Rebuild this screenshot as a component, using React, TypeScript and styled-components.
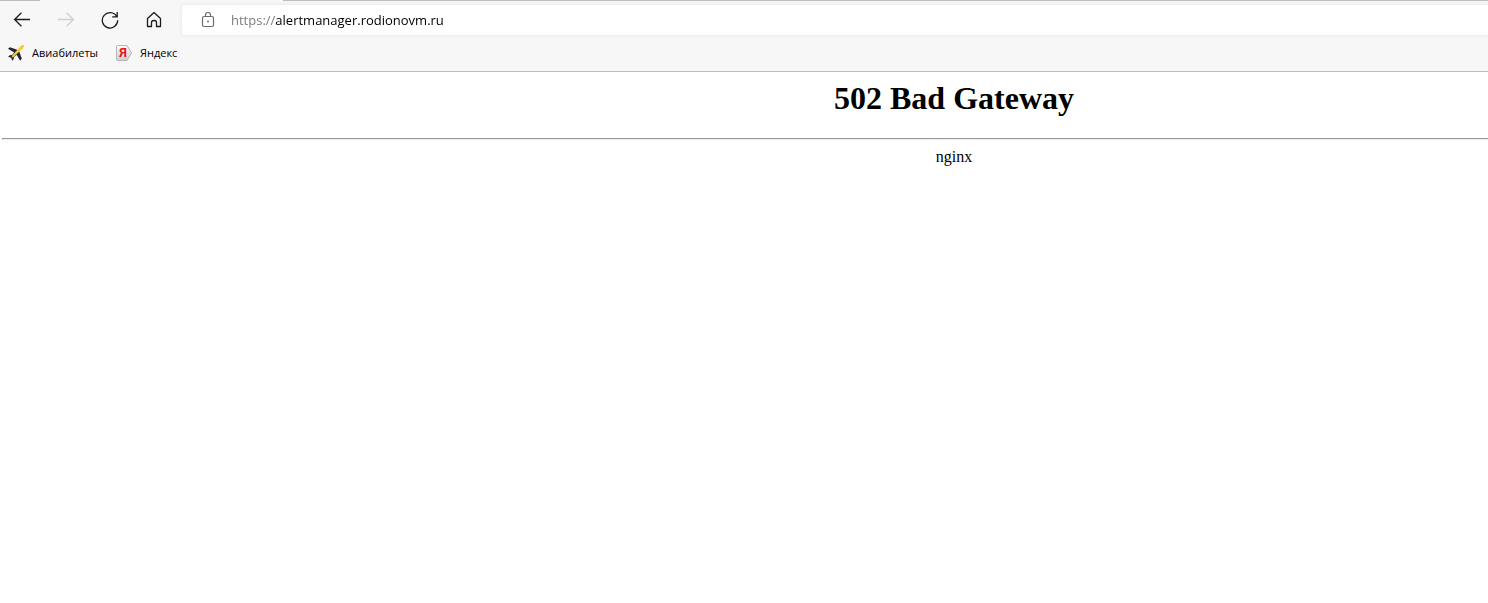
import React, { useState } from 'react';
import styled, { createGlobalStyle } from 'styled-components';

const GlobalStyle = createGlobalStyle`
  * { box-sizing: border-box; }
  body { margin: 0; background: #fff; overflow-x: hidden; }
`;

const Chrome = styled.header`
  background: #f7f7f7;
  border-bottom: 1px solid #bdbdbd;
  font-family: "Segoe UI", "Open Sans", "Noto Sans", sans-serif;
`;

const TabEdge = styled.div`
  display: flex;
  height: 1px;
  background: #bdbdbd;
`;

const ActiveTab = styled.div`
  width: 243px;
  margin-left: 40px;
  background: #f7f7f7;
`;

const Toolbar = styled.div`
  display: flex;
  align-items: center;
  height: 38px;
`;

const NavButtons = styled.nav`
  display: flex;
  flex: none;
  width: 182px;
`;

const NavButton = styled.button`
  display: flex;
  align-items: center;
  justify-content: center;
  width: 44px;
  height: 36px;
  padding: 0;
  border: 0;
  background: none;
  color: #1b1b1b;
  &:disabled { color: #cfcfcf; }
`;

const AddressBar = styled.label`
  display: flex;
  flex: 1;
  align-items: center;
  gap: 14px;
  height: 30px;
  padding-left: 17px;
  border-radius: 4px 0 0 4px;
  background: #fff;
  box-shadow: 0 0 5px rgba(0, 0, 0, 0.08);
`;

const UrlInput = styled.input`
  flex: 1;
  min-width: 0;
  padding: 0;
  border: 0;
  outline: 0;
  font: 13px/18px "Segoe UI", "Open Sans", "Noto Sans", sans-serif;
  color: transparent;
  background: linear-gradient(to right, #767676 44px, #000 44px);
  background-clip: text;
  -webkit-background-clip: text;
`;

const Bookmarks = styled.nav`
  display: flex;
  align-items: center;
  gap: 18px;
  height: 32px;
  padding: 0 8px 4px;
`;

const Bookmark = styled.a`
  display: flex;
  align-items: center;
  gap: 8px;
  color: #000;
  font-size: 11px;
  line-height: 16px;
  text-decoration: none;
`;

const Viewport = styled.main`
  overflow: hidden;
  font: 16px/18px "Times New Roman", "Liberation Serif", serif;
  color: #000;
  text-align: center;
`;

/* The document is wider than the window and runs off its right side. */
const ErrorPage = styled.div`
  margin: 8px -418px 0 2px;
`;

const Title = styled.h1`
  margin: 0 0 21px;
  font-size: 32px;
  line-height: 37px;
`;

const Rule = styled.hr`
  margin: 0 0 8px;
  border: 1px solid;
  border-color: #9a9a9a #eee #eee #9a9a9a;
`;

const Server = styled.div``;

const line = { fill: 'none', stroke: 'currentColor', strokeWidth: 1.3 } as const;

const BackIcon = () => (
  <svg width="18" height="16" viewBox="0 0 18 16" {...line} aria-hidden="true">
    <path d="M17 7.5H1.5M8.4 0.8L1.6 7.5L8.4 14.2" />
  </svg>
);

const ForwardIcon = () => (
  <svg width="18" height="16" viewBox="0 0 18 16" {...line} aria-hidden="true">
    <path d="M1 7.5H16.5M9.6 0.8L16.4 7.5L9.6 14.2" />
  </svg>
);

const ReloadIcon = () => (
  <svg width="18" height="18" viewBox="0 0 18 18" {...line} aria-hidden="true">
    <path d="M15.7 5.5A7.7 7.7 0 1 0 16.7 9.2M16.2 1V5.8H11.2" />
  </svg>
);

const HomeIcon = () => (
  <svg width="18" height="18" viewBox="0 0 18 18" {...line} strokeLinejoin="round" aria-hidden="true">
    <path d="M2.5 7.6L9 1.6L15.5 7.6V15.5H11.5V11.5C11.5 10.2 10.6 9.5 9 9.5S6.5 10.2 6.5 11.5V15.5H2.5Z" />
  </svg>
);

const LockIcon = () => (
  <svg width="18" height="18" viewBox="0 0 18 18" fill="none" stroke="#6b6b6b" strokeWidth="1.2" aria-hidden="true">
    <rect x="3.5" y="5.5" width="11" height="10" rx="1.5" />
    <path d="M6.5 5.5V4A2.5 2.5 0 0 1 11.5 4V5.5" />
    <circle cx="9" cy="10.5" r="0.9" fill="#6b6b6b" stroke="none" />
  </svg>
);

const PlaneIcon = () => (
  <svg width="16" height="16" viewBox="0 0 16 16" aria-hidden="true">
    <path fill="#24262e" d="M0 3.8L1.8 2.2L8.5 4.4L11 6L13.8 13.6L12.2 15.8L8.6 9.8L6 12L5.6 14.2L4.2 15.8L3.2 12.7L0.1 11.8L1.7 10.2L4 10L6.2 7.4Z" />
    <path fill="#fbc52c" d="M3.6 12.4L4.1 10.6L12.4 1.5C13.4 0.4 14.9 -0.1 15.8 0.2C16.1 1.2 15.6 2.6 14.5 3.7L5.5 12Z" />
  </svg>
);

const FaviconBadge = styled.span`
  display: grid;
  width: 16px;
  height: 16px;
  align-items: center;
  > * { grid-area: 1 / 1; }
`;

const BadgeLetter = styled.span`
  width: 14px;
  color: #e8141c;
  font: bold 13px/16px Roboto, "Liberation Sans", sans-serif;
  text-align: center;
`;

const YandexIcon = () => (
  <FaviconBadge aria-hidden="true">
    <svg width="16" height="16" viewBox="0 0 16 16">
      <defs>
        <linearGradient id="badge" x2="0" y2="1">
          <stop stopColor="#fafafa" />
          <stop offset="1" stopColor="#cfcfcf" />
        </linearGradient>
      </defs>
      <path d="M1.5 0.5H11L15.5 8L11 15.5H1.5Q0.5 15.5 0.5 14.5V1.5Q0.5 0.5 1.5 0.5Z" fill="url(#badge)" stroke="#b5b5b5" />
    </svg>
    <BadgeLetter>Я</BadgeLetter>
  </FaviconBadge>
);

export default function App() {
  const [url, setUrl] = useState('https://alertmanager.rodionovm.ru');
  return (
    <>
      <GlobalStyle />
      <Chrome>
        <TabEdge><ActiveTab /></TabEdge>
        <Toolbar>
          <NavButtons>
            <NavButton aria-label="Back"><BackIcon /></NavButton>
            <NavButton aria-label="Forward" disabled><ForwardIcon /></NavButton>
            <NavButton aria-label="Reload"><ReloadIcon /></NavButton>
            <NavButton aria-label="Home"><HomeIcon /></NavButton>
          </NavButtons>
          <AddressBar>
            <LockIcon />
            <UrlInput aria-label="Address" spellCheck={false} value={url} onChange={(e) => setUrl(e.target.value)} />
          </AddressBar>
        </Toolbar>
        <Bookmarks aria-label="Bookmarks">
          <Bookmark href="#tickets"><PlaneIcon />Авиабилеты</Bookmark>
          <Bookmark href="#yandex"><YandexIcon />Яндекс</Bookmark>
        </Bookmarks>
      </Chrome>
      <Viewport>
        <ErrorPage>
          <Title>502 Bad Gateway</Title>
          <Rule />
          <Server>nginx</Server>
        </ErrorPage>
      </Viewport>
    </>
  );
}
